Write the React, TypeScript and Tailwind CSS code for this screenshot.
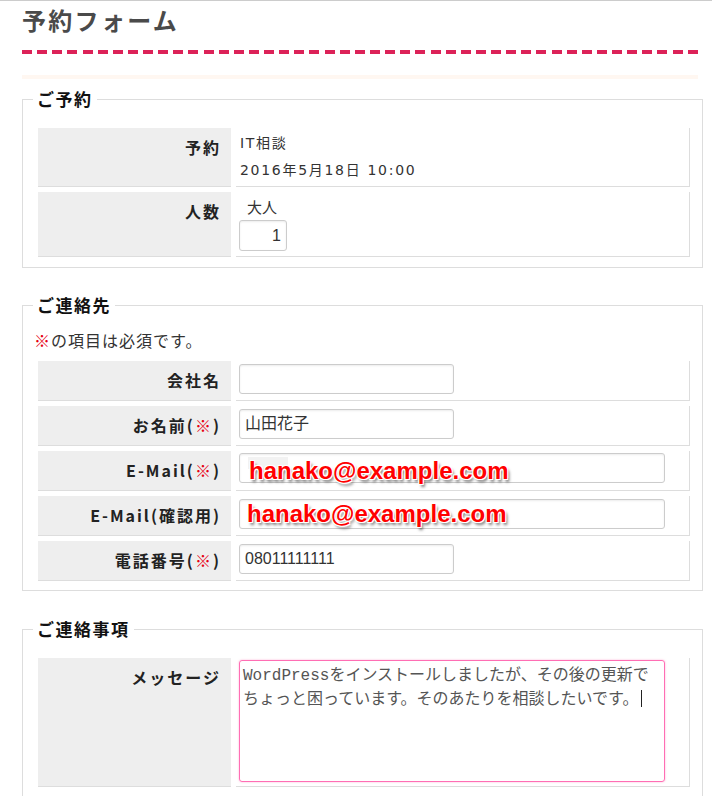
import type { ReactNode } from "react"

const jp = "font-['Noto_Sans_CJK_JP','Noto_Sans',sans-serif]"

function Req() {
  return <span className="text-[#e60012]">※</span>
}

function Th({ children }: { children: ReactNode }) {
  return (
    <div className="w-[193px] shrink-0 border-b border-[#ddd] bg-[#eee] pt-[8px] pr-[10px] text-right text-[16px] leading-[22px] font-bold tracking-[2px] text-[#222]">
      {children}
    </div>
  )
}

function Row({ label, children, tdClass = "" }: { label: ReactNode; children: ReactNode; tdClass?: string }) {
  return (
    <div className="flex gap-[5px]">
      <Th>{label}</Th>
      <div className={`w-[454px] border-r border-b border-[#ddd] pl-[3px] ${tdClass}`}>{children}</div>
    </div>
  )
}

function Field({ value = "", wide = false, children }: { value?: string; wide?: boolean; children?: ReactNode }) {
  return (
    <div
      className={`relative h-[30px] ${wide ? "w-[426px]" : "w-[215px]"} rounded-[3px] border border-[#ccc] bg-white pl-[5px] text-[16px] leading-[28px] text-[#333] shadow-[inset_0_1px_2px_rgba(0,0,0,0.08)] font-['Liberation_Sans','Noto_Sans_CJK_JP',sans-serif]`}
    >
      {value}
      {children}
    </div>
  )
}

function Overlay({ text, className }: { text: string; className: string }) {
  return (
    <span
      className={`absolute whitespace-nowrap font-['Liberation_Sans',sans-serif] text-[24px] leading-[28px] font-bold text-[#ff0000] [text-shadow:1px_1px_0_#fff,-1px_-1px_0_#fff,1px_-1px_0_#fff,-1px_1px_0_#fff,2px_3px_3px_rgba(0,0,0,0.55)] ${className}`}
    >
      {text}
    </span>
  )
}

function Section({ title, children, className = "" }: { title: string; children: ReactNode; className?: string }) {
  return (
    <fieldset className={`w-[681px] border border-[#ddd] ${className}`}>
      <legend className="ml-[10px] px-[4px] text-[17px] leading-[24px] font-bold tracking-[1.5px] text-[#111]">
        {title}
      </legend>
      {children}
    </fieldset>
  )
}

export default function App() {
  return (
    <div className={`min-h-screen border-t border-[#ccc] bg-white pl-[22px] pb-[40px] ${jp}`}>
      <h1 className="pt-[3px] text-[24px] leading-[32px] font-bold tracking-[2.3px] text-[#4a4a4a]">予約フォーム</h1>
      <div className="mt-[14px] h-[4px] w-[676px] bg-[repeating-linear-gradient(90deg,#dc2258_0_10px,transparent_10px_15.13px)]" />
      <div className="mt-[21px] h-[4px] w-[676px] bg-[#fff7f1]" />

      <Section title="ご予約" className="mt-[8px] pb-[10px]">
        <div className="flex flex-col gap-[5px] pt-[17px] pl-[15px]">
          <Row label="予約" tdClass="pt-[2px] pb-[2px]">
            <div className="pl-[1px] font-['DejaVu_Sans','Noto_Sans_CJK_JP',sans-serif] text-[14px] leading-[27px] tracking-[1.7px] text-[#333]">
              <div>IT相談</div>
              <div>2016年5月18日 10:00</div>
            </div>
          </Row>
          <Row label="人数" tdClass="pt-[2px] pb-[5px]">
            <div className="pl-[8px] text-[15px] leading-[26px] text-[#333]">大人</div>
            <div className="h-[31px] w-[48px] rounded-[3px] border border-[#ccc] pr-[5px] text-right font-['Liberation_Sans',sans-serif] text-[16px] leading-[29px] text-[#333] shadow-[inset_0_1px_2px_rgba(0,0,0,0.08)]">
              1
            </div>
          </Row>
        </div>
      </Section>

      <Section title="ご連絡先" className="mt-[25px] pb-[9px]">
        <p className="pl-[11px] pt-[12px] text-[16px] leading-[22px] tracking-[1px] text-[#333]">
          <Req />の項目は必須です。
        </p>
        <div className="flex flex-col gap-[5px] pl-[15px] pt-[10px]">
          <Row label="会社名" tdClass="pt-[3px] pb-[6px]">
            <Field />
          </Row>
          <Row label={<>お名前(<Req />)</>} tdClass="pt-[3px] pb-[6px]">
            <Field value="山田花子" />
          </Row>
          <Row label={<>E-Mail(<Req />)</>} tdClass="pt-[2px] pb-[7px]">
            <Field wide>
              <span className="absolute left-[8px] top-[3px] h-[12px] w-[40px] bg-[#f2f2f2]" />
              <Overlay text="hanako@example.com" className="left-[9px] top-[3px]" />
            </Field>
          </Row>
          <Row label="E-Mail(確認用)" tdClass="pt-[3px] pb-[6px]">
            <Field wide>
              <Overlay text="hanako@example.com" className="left-[7px] top-0" />
            </Field>
          </Row>
          <Row label={<>電話番号(<Req />)</>} tdClass="pt-[3px] pb-[6px]">
            <Field value="08011111111" />
          </Row>
        </div>
      </Section>

      <Section title="ご連絡事項" className="mt-[26px] pb-[10px]">
        <div className="pt-[17px] pl-[15px]">
          <Row label="メッセージ" tdClass="pt-[2px] pb-[4px]">
            <div className="h-[122px] w-[426px] rounded-[3px] border border-[#ff6eb4] pl-[3px] pt-[4px] font-['Liberation_Mono','Noto_Sans_CJK_JP',monospace] text-[16px] leading-[22px] text-[#555] shadow-[0_0_2px_rgba(255,110,180,0.6)]">
              WordPressをインストールしましたが、その後の更新でちょっと困っています。そのあたりを相談したいです。
              <span className="ml-[2px] inline-block h-[17px] w-px translate-y-[3px] bg-[#222]" />
            </div>
          </Row>
        </div>
      </Section>
    </div>
  )
}
